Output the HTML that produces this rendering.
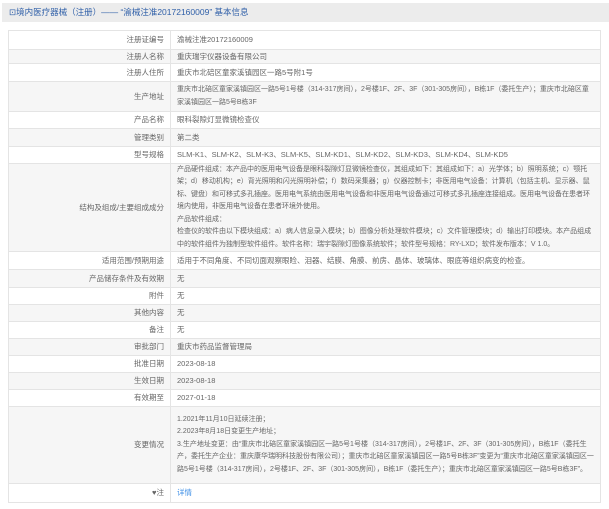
<!DOCTYPE html>
<html><head><meta charset="utf-8"><style>
*{margin:0;padding:0;box-sizing:border-box}
body{width:609px;height:509px;background:#fff;font-family:"Liberation Sans","Noto Sans CJK SC",sans-serif;font-size:7.5px;color:#666;overflow:hidden;position:relative}
.hd{position:absolute;left:2px;top:3px;width:607px;height:19px;background:#ececec;color:#2f5fa8;font-size:8.5px;line-height:19px;padding-left:7px}
table{position:absolute;left:8px;top:30px;width:593px;border-collapse:collapse;table-layout:fixed}
td{border:1px solid #e4e4e4;padding:0 6px;line-height:12px;vertical-align:middle;overflow:hidden}
td.l{width:162px;text-align:right}
tr:nth-child(even) td{background:#f6f6f6}
td.m{font-size:7px;line-height:12.4px}
a{color:#3c8ee6;text-decoration:none}
</style></head><body>
<div class="hd">⊡境内医疗器械（注册）—— “渝械注准20172160009” 基本信息</div>
<table>
<tr style="height:19px"><td class="l">注册证编号</td><td>渝械注准20172160009</td></tr>
<tr style="height:14px"><td class="l">注册人名称</td><td>重庆瑞宇仪器设备有限公司</td></tr>
<tr style="height:18px"><td class="l">注册人住所</td><td>重庆市北碚区童家溪镇园区一路5号附1号</td></tr>
<tr style="height:30px"><td class="l">生产地址</td><td class="m">重庆市北碚区童家溪镇园区一路5号1号楼（314-317房间），2号楼1F、2F、3F（301-305房间），B栋1F（委托生产）；重庆市北碚区童家溪镇园区一路5号B栋3F</td></tr>
<tr style="height:17px"><td class="l">产品名称</td><td>眼科裂隙灯显微镜检查仪</td></tr>
<tr style="height:18px"><td class="l">管理类别</td><td>第二类</td></tr>
<tr style="height:17px"><td class="l">型号规格</td><td>SLM-K1、SLM-K2、SLM-K3、SLM-K5、SLM-KD1、SLM-KD2、SLM-KD3、SLM-KD4、SLM-KD5</td></tr>
<tr style="height:88px"><td class="l">结构及组成/主要组成成分</td><td class="m">产品硬件组成：本产品中的医用电气设备是眼科裂隙灯显微镜检查仪，其组成如下：其组成如下：a）光学体；b）照明系统；c）颚托架；d）移动机构；e）背光照明和闪光照明补偿；f）数码采集器；g）仪器控制卡；非医用电气设备：计算机（包括主机、显示器、鼠标、键盘）和可移式多孔插座。医用电气系统由医用电气设备和非医用电气设备通过可移式多孔插座连接组成。医用电气设备在患者环境内使用，非医用电气设备在患者环境外使用。<br>产品软件组成：<br>检查仪的软件由以下模块组成：a）病人信息录入模块；b）图像分析处理软件模块；c）文件管理模块；d）输出打印模块。本产品组成中的软件组件为独制型软件组件。软件名称：瑞宇裂隙灯图像系统软件；软件型号规格：RY-LXD；软件发布版本：V 1.0。</td></tr>
<tr style="height:18px"><td class="l">适用范围/预期用途</td><td>适用于不同角度、不同切面观察眼睑、泪器、结膜、角膜、前房、晶体、玻璃体、眼底等组织病变的检查。</td></tr>
<tr style="height:18px"><td class="l">产品储存条件及有效期</td><td>无</td></tr>
<tr style="height:17px"><td class="l">附件</td><td>无</td></tr>
<tr style="height:17px"><td class="l">其他内容</td><td>无</td></tr>
<tr style="height:17px"><td class="l">备注</td><td>无</td></tr>
<tr style="height:17px"><td class="l">审批部门</td><td>重庆市药品监督管理局</td></tr>
<tr style="height:17px"><td class="l">批准日期</td><td>2023-08-18</td></tr>
<tr style="height:17px"><td class="l">生效日期</td><td>2023-08-18</td></tr>
<tr style="height:17px"><td class="l">有效期至</td><td>2027-01-18</td></tr>
<tr style="height:77px"><td class="l">变更情况</td><td class="m">1.2021年11月10日延续注册；<br>2.2023年8月18日变更生产地址；<br>3.生产地址变更：由“重庆市北碚区童家溪镇园区一路5号1号楼（314-317房间），2号楼1F、2F、3F（301-305房间），B栋1F（委托生产，委托生产企业：重庆康华瑞明科技股份有限公司）；重庆市北碚区童家溪镇园区一路5号B栋3F”变更为“重庆市北碚区童家溪镇园区一路5号1号楼（314-317房间），2号楼1F、2F、3F（301-305房间），B栋1F（委托生产）；重庆市北碚区童家溪镇园区一路5号B栋3F”。</td></tr>
<tr style="height:19px"><td class="l">♥注</td><td><a>详情</a></td></tr>
</table>
</body></html>
